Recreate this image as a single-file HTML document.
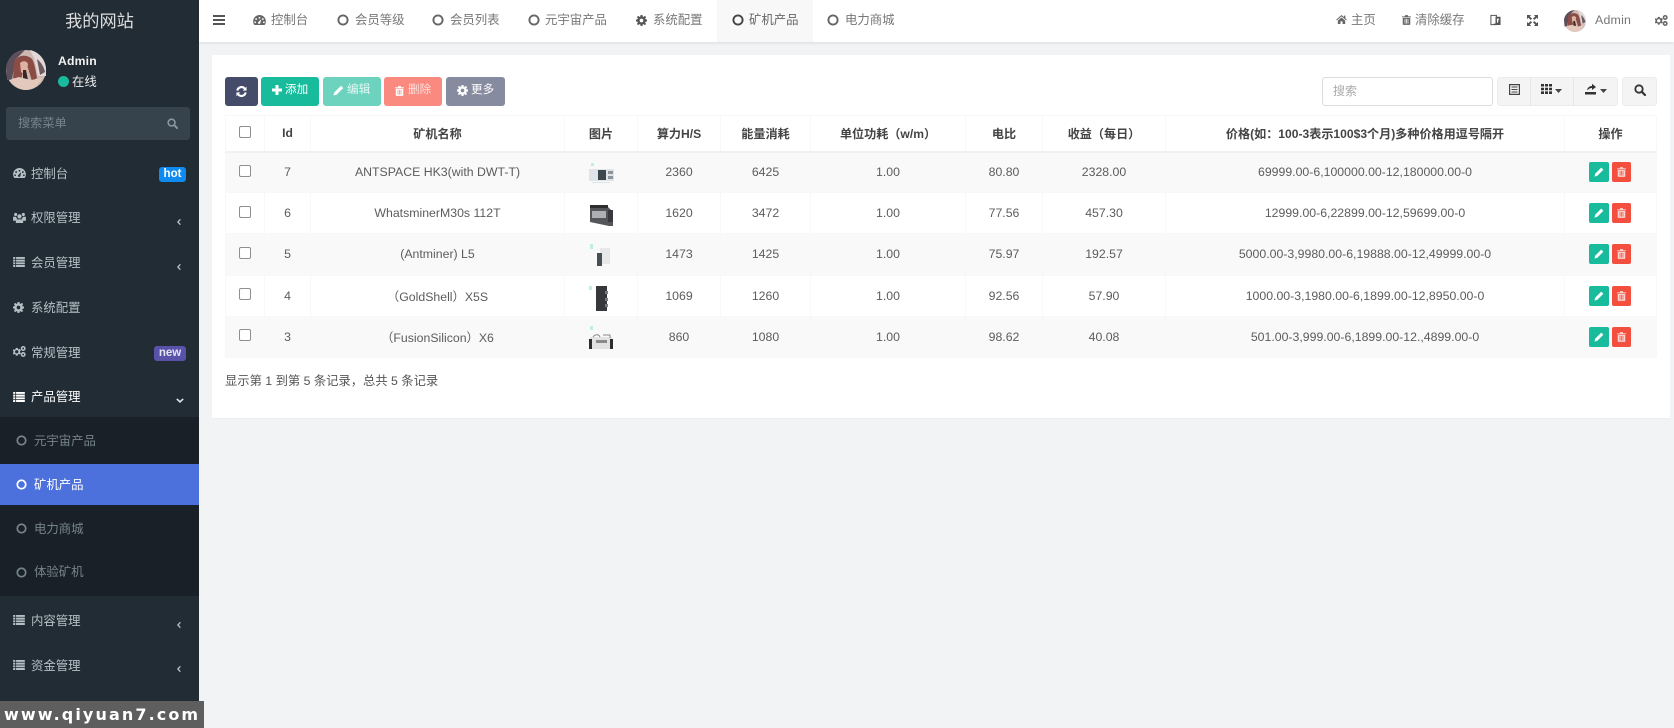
<!DOCTYPE html>
<html lang="zh">
<head>
<meta charset="utf-8">
<title>矿机产品</title>
<style>
*{box-sizing:border-box}
html,body{margin:0;padding:0}
html{background:#f2f3f5}
body{width:1674px;height:728px;overflow:hidden;position:relative;background:#f2f3f5;font-family:"Liberation Sans","Noto Sans CJK SC",sans-serif;font-size:12.3px;color:#555;filter:blur(.35px)}
.a{position:absolute;white-space:nowrap}
svg{display:block;position:absolute;overflow:visible}
#side{position:absolute;left:0;top:0;width:199px;height:728px;background:#212c34;color:#b4c0c6}
.m{position:absolute;left:31px;font-size:12.4px;line-height:16px;white-space:nowrap}
.s{position:absolute;left:34px;font-size:12.4px;line-height:16px;white-space:nowrap;color:#75838a}
#top{position:absolute;left:199px;top:0;width:1475px;height:42px;background:#fff;box-shadow:0 1px 3px rgba(0,0,0,.1)}
.t{position:absolute;font-size:12.4px;line-height:16px;top:12px;color:#777;white-space:nowrap}
#panel{position:absolute;left:212px;top:55px;width:1458px;height:363px;background:#fff;box-shadow:0 1px 1px rgba(0,0,0,.03)}
.b{position:absolute;top:77px;height:29px;border-radius:3px;color:#fff;font-size:11.6px;line-height:26px;white-space:nowrap}
table{position:absolute;left:225px;top:115px;width:1431px;border-collapse:collapse;table-layout:fixed;font-size:12.3px;color:#5c5c5c}
th,td{border:1px solid #f8f8f8;text-align:center;padding:0;font-weight:400;position:relative}
th{height:36px;font-weight:700;color:#444;border-bottom:2px solid #f1f1f1;font-size:12.1px}
td{height:41.2px}
tr.o td{background:#f9f9f9}
.cb{display:block;width:12px;height:12px;border:1px solid #8f8f8f;border-radius:2px;background:#fff;margin:-3px auto 0}
.e,.d{position:absolute;top:50%;margin-top:-10px;width:20px;height:20px;border-radius:2px}
.e{left:24px;background:#18bc9c}
.d{left:47px;width:19px;background:#f44e3f}
#wm{position:absolute;left:0;top:701px;width:204px;height:27px;background:#5e5e5e;color:#fff;font-family:"DejaVu Sans","Liberation Sans",sans-serif;font-weight:700;font-size:16px;letter-spacing:2.1px;line-height:27px;padding-left:4px;white-space:nowrap;overflow:hidden}
</style>
</head>
<body>
<svg width="0" height="0" style="position:absolute">
<defs>
<symbol id="list" viewBox="0 0 14 12"><path fill="currentColor" d="M0 0h2.500v2.300H0zM3.500 0H14v2.300H3.500zM0 3.200h2.500v2.300H0zM3.500 3.200H14v2.300H3.500zM0 6.400h2.500v2.300H0zM3.500 6.400H14v2.300H3.500zM0 9.600h2.500V12H0zM3.500 9.600H14V12H3.500z"/></symbol>
<symbol id="dash" viewBox="0 0 14 11"><path fill="currentColor" fill-rule="evenodd" d="M7 0a7 7 0 0 1 7 7c0 1.600-.5 3-1.400 4H1.400C.5 10 0 8.600 0 7a7 7 0 0 1 7-7zM7 2a1 1 0 1 0 0 2 1 1 0 0 0 0-2zM3.300 3.500a1 1 0 1 0 0 2 1 1 0 0 0 0-2zM10.700 3.500a1 1 0 1 0 0 2 1 1 0 0 0 0-2zM2.200 7a1 1 0 1 0 0 2 1 1 0 0 0 0-2zM11.800 7a1 1 0 1 0 0 2 1 1 0 0 0 0-2zM9 4.500 6.200 7.300a1.300 1.300 0 1 0 1.700 1.500z"/></symbol>
<symbol id="users" viewBox="0 0 14 12"><path fill="currentColor" d="M7 2.500a2.300 2.300 0 1 1 0 4.600 2.300 2.300 0 0 1 0-4.600zM2.800 1a1.700 1.700 0 1 1 0 3.400 1.700 1.700 0 0 1 0-3.400zM11.200 1a1.700 1.700 0 1 1 0 3.400 1.700 1.700 0 0 1 0-3.400zM0 5.200h3.200c.3 1 .8 1.800 1.500 2.200C3.500 8 3 9 3 9.500H0zM14 5.200h-3.200c-.3 1-.8 1.800-1.500 2.200 1.200.6 1.700 1.600 1.700 2.100H14zM4 8h6c.8 0 1 1.200 1 4H3c0-2.800.2-4 1-4z"/></symbol>
<symbol id="cog" viewBox="0 0 12 12"><path fill="currentColor" fill-rule="evenodd" d="M5 0h2l.3 1.700 1 .4L9.800 1l1.300 1.300L10 3.700l.4 1L12 5v2l-1.600.3-.4 1 1 1.500L9.700 11l-1.400-1-1 .4L7 12H5l-.3-1.600-1-.4-1.500 1L1 9.700l1-1.400-.4-1L0 7V5l1.600-.3.4-1L1 2.200 2.300 1l1.400 1 1-.4zM6 4a2 2 0 1 0 0 4 2 2 0 0 0 0-4z"/></symbol>
<symbol id="cogs" viewBox="0 0 14 12"><path fill="currentColor" fill-rule="evenodd" d="M3 2h2l.3 1.200 1 .5 1.200-.5L8.500 5l-.9.900v1l.9.900-1 1.500-1.200-.6-1 .5L5 10.500H3l-.3-1.300-1-.5-1.200.6-.9-1.500.9-.9v-1L-.4 5l.9-1.500 1.200.5 1-.5zM4 4.500a1.800 1.800 0 1 0 0 3.600 1.800 1.800 0 0 0 0-3.600zM11 0a2.700 2.700 0 1 1 0 5.400A2.700 2.700 0 0 1 11 0zm0 1.700a1 1 0 1 0 0 2 1 1 0 0 0 0-2zM11 6.600a2.700 2.700 0 1 1 0 5.400 2.700 2.700 0 0 1 0-5.400zm0 1.700a1 1 0 1 0 0 2 1 1 0 0 0 0-2z"/></symbol>
<symbol id="trash" viewBox="0 0 12 13"><path fill="currentColor" fill-rule="evenodd" d="M4.300 0h3.400l.7 1.600H12v1.300H0V1.600h3.600zM1 3.700h10V12c0 .6-.4 1-1 1H2c-.6 0-1-.4-1-1zM3.500 5v6.300h1V5zm2 0v6.300h1V5zm2 0v6.300h1V5z"/></symbol>
<symbol id="pen" viewBox="0 0 12 12"><path fill="currentColor" d="M8.700.8 11.200 3.300 4 10.500.5 11.500 1.500 8z"/></symbol>
<symbol id="home" viewBox="0 0 13 11"><path fill="currentColor" d="M6.500 0 9.500 2.600V.8h1.700v3.300L13 5.700l-.8.900L6.500 1.700.8 6.600 0 5.700zM2 6.800 6.500 3 11 6.800V11H7.800V7.800H5.200V11H2z"/></symbol>
<symbol id="refresh" viewBox="0 0 12 12"><path fill="none" stroke="currentColor" stroke-width="2.300" d="M1.500 5A4.600 4.600 0 0 1 9.700 3M10.500 7A4.600 4.600 0 0 1 2.300 9"/><path fill="currentColor" d="M11.500.8V5H7.300zM.5 11.200V7h4.200z"/></symbol>
<symbol id="search" viewBox="0 0 12 12"><circle cx="5" cy="5" r="3.700" fill="none" stroke="currentColor" stroke-width="1.800"/><path stroke="currentColor" stroke-width="2.200" stroke-linecap="round" d="M8 8l3 3"/></symbol>
<symbol id="chev" viewBox="0 0 6 10"><path fill="none" stroke="currentColor" stroke-width="2" d="M5 1 1.300 5 5 9"/></symbol>
<symbol id="chevd" viewBox="0 0 10 6"><path fill="none" stroke="currentColor" stroke-width="2" d="M1 1l4 3.700L9 1"/></symbol>
<symbol id="ring" viewBox="0 0 12 12"><circle cx="6" cy="6" r="4.600" fill="none" stroke="currentColor" stroke-width="1.900"/></symbol>
<symbol id="ava" viewBox="0 0 40 40"><circle cx="20" cy="20" r="20" fill="#cdb8b2"/><path fill="#e3d8d8" d="M24 0c9 2 15 9 16 18v8H32L28 8z"/><path fill="#5d4f5a" d="M0 17C2 7 10 1 19 0L9 10l-3 20H1z"/><path fill="#6f5a62" d="M31 9c4 3 7 8 8 13l-5 3z"/><path fill="#8a4c44" d="M9 10c5-6 13-5 17-1 3 5 4 14 5 19l-5 3-4-13-4-1-3 13-8-2c1-6-1-13 2-18z"/><path fill="#deb2a0" d="M14 13c3-3 7-2 8 1l-1 8c-2 2-4 2-6 0z"/><path fill="#3c2624" d="M17 20l3 0 2 10-5 0z"/><path fill="#e2c9bc" d="M3 30l10-3 12 3 11-2c-3 7-9 12-16 12S7 36 3 30z"/></symbol>
<symbol id="tr" viewBox="0 0 12 13"><path fill="none" stroke="currentColor" stroke-width="1.100" d="M1 1.500h6v10H1z"/><path fill="currentColor" d="M6 3h5.500v9H4v-1.500h2z"/><path fill="#fff" d="M7.500 5h2.500v1H9.300l-.6 3.500h-1z"/></symbol>
<symbol id="exp" viewBox="0 0 12 12"><path fill="currentColor" d="M0 0h4.500L3 1.500 5.500 4 4 5.500 1.500 3 0 4.500zM12 0v4.500L10.500 3 8 5.500 6.500 4 9 1.500 7.500 0zM0 12V7.500L1.500 9 4 6.500 5.500 8 3 10.500 4.500 12zM12 12H7.500L9 10.500 6.500 8 8 6.500 10.500 9 12 7.500z"/></symbol>
</defs>
</svg>

<div id="side">
  <div class="a" style="left:0;width:199px;text-align:center;top:9px;font-size:17.2px;line-height:24px;color:#ddd">我的网站</div>
  <svg style="left:6px;top:50px" width="40" height="40"><use href="#ava"/></svg>
  <div class="a" style="left:58px;top:53px;font-size:12.2px;font-weight:700;color:#f2f2f2;line-height:16px;letter-spacing:.2px">Admin</div>
  <div class="a" style="left:58px;top:76px;width:11px;height:11px;border-radius:50%;background:#18bc9c"></div>
  <div class="a" style="left:72px;top:74px;font-size:12.4px;color:#eee;line-height:16px">在线</div>
  <div class="a" style="left:6px;top:107px;width:184px;height:33px;background:#36434c;border-radius:3px"></div>
  <div class="a" style="left:18px;top:115px;font-size:12.2px;line-height:16px;color:#76838b">搜索菜单</div>
  <svg style="left:167px;top:118px;color:#8a969d" width="11" height="11"><use href="#search"/></svg>

  <svg style="left:13px;top:168px" width="13" height="10"><use href="#dash"/></svg>
  <div class="m" style="top:166px">控制台</div>
  <div class="a" style="left:159px;top:167px;width:27px;height:15px;border-radius:3px;background:#0e8af0;color:#fff;font-weight:700;font-size:11.5px;line-height:14px;text-align:center">hot</div>

  <svg style="left:13px;top:212px" width="13" height="11"><use href="#users"/></svg>
  <div class="m" style="top:210px">权限管理</div>
  <svg style="left:177px;top:218px" width="4" height="8"><use href="#chev"/></svg>

  <svg style="left:13px;top:257px" width="12" height="10"><use href="#list"/></svg>
  <div class="m" style="top:255px">会员管理</div>
  <svg style="left:177px;top:263px" width="4" height="8"><use href="#chev"/></svg>

  <svg style="left:13px;top:302px" width="11" height="11"><use href="#cog"/></svg>
  <div class="m" style="top:300px">系统配置</div>

  <svg style="left:13px;top:346px" width="13" height="11"><use href="#cogs"/></svg>
  <div class="m" style="top:345px">常规管理</div>
  <div class="a" style="left:154px;top:346px;width:32px;height:15px;border-radius:3px;background:#5a52a8;color:#e4e4f2;font-weight:700;font-size:11.5px;line-height:14px;text-align:center">new</div>

  <svg style="left:13px;top:392px;color:#fff" width="12" height="10"><use href="#list"/></svg>
  <div class="m" style="top:389px;color:#fff">产品管理</div>
  <svg style="left:176px;top:398px;color:#dfe4e6" width="8" height="5"><use href="#chevd"/></svg>

  <div class="a" style="left:0;top:417px;width:199px;height:179px;background:#1a2028"></div>
  <div class="a" style="left:0;top:464px;width:199px;height:41px;background:#4c70dc"></div>
  <svg style="left:16px;top:435px;color:#75838a" width="11" height="11"><use href="#ring"/></svg>
  <div class="s" style="top:433px">元宇宙产品</div>
  <svg style="left:16px;top:479px;color:#fff" width="11" height="11"><use href="#ring"/></svg>
  <div class="s" style="top:477px;color:#fff">矿机产品</div>
  <svg style="left:16px;top:523px;color:#75838a" width="11" height="11"><use href="#ring"/></svg>
  <div class="s" style="top:521px;left:34px">电力商城</div>
  <svg style="left:16px;top:567px;color:#75838a" width="11" height="11"><use href="#ring"/></svg>
  <div class="s" style="top:564px">体验矿机</div>

  <svg style="left:13px;top:615px" width="12" height="10"><use href="#list"/></svg>
  <div class="m" style="top:613px">内容管理</div>
  <svg style="left:177px;top:621px" width="4" height="8"><use href="#chev"/></svg>
  <svg style="left:13px;top:660px" width="12" height="10"><use href="#list"/></svg>
  <div class="m" style="top:658px">资金管理</div>
  <svg style="left:177px;top:665px" width="4" height="8"><use href="#chev"/></svg>
</div>

<div id="top">
  <div class="a" style="left:518px;top:0;width:96px;height:42px;background:#f8f8f8"></div>
  <svg style="left:14px;top:15px;color:#555" width="12" height="10"><path fill="currentColor" d="M0 0h12v2H0zM0 4h12v2H0zM0 8h12v2H0z"/></svg>
  <svg style="left:54px;top:15px;color:#666" width="13" height="10"><use href="#dash"/></svg>
  <div class="t" style="left:72px">控制台</div>
  <svg style="left:138px;top:14px;color:#666" width="12" height="12"><use href="#ring"/></svg>
  <div class="t" style="left:156px">会员等级</div>
  <svg style="left:233px;top:14px;color:#666" width="12" height="12"><use href="#ring"/></svg>
  <div class="t" style="left:251px">会员列表</div>
  <svg style="left:329px;top:14px;color:#666" width="12" height="12"><use href="#ring"/></svg>
  <div class="t" style="left:346px">元宇宙产品</div>
  <svg style="left:437px;top:15px;color:#555" width="11" height="11"><use href="#cog"/></svg>
  <div class="t" style="left:454px">系统配置</div>
  <svg style="left:533px;top:14px;color:#444" width="12" height="12"><use href="#ring"/></svg>
  <div class="t" style="left:550px;color:#666">矿机产品</div>
  <svg style="left:628px;top:14px;color:#666" width="12" height="12"><use href="#ring"/></svg>
  <div class="t" style="left:646px">电力商城</div>

  <svg style="left:1137px;top:15px;color:#666" width="11" height="9"><use href="#home"/></svg>
  <div class="t" style="left:1152px">主页</div>
  <svg style="left:1203px;top:15px;color:#666" width="9" height="10"><use href="#trash"/></svg>
  <div class="t" style="left:1216px">清除缓存</div>
  <svg style="left:1291px;top:14px;color:#555" width="11" height="12"><use href="#tr"/></svg>
  <svg style="left:1328px;top:15px;color:#555" width="11" height="11"><use href="#exp"/></svg>
  <svg style="left:1365px;top:10px" width="22" height="22"><use href="#ava"/></svg>
  <div class="t" style="left:1396px;letter-spacing:.2px">Admin</div>
  <svg style="left:1456px;top:15px;color:#666" width="13" height="11"><use href="#cogs"/></svg>
</div>

<div id="panel"></div>

<div class="b" style="left:225px;width:33px;background:#444c69"><svg style="left:11px;top:9px" width="11" height="11"><use href="#refresh"/></svg></div>
<div class="b" style="left:261px;width:58px;background:#18bc9c"><svg style="left:11px;top:8px" width="10" height="10"><path fill="currentColor" d="M3.500 0h3v3.500H10v3H6.500V10h-3V6.500H0v-3h3.500z"/></svg><span class="a" style="left:24px">添加</span></div>
<div class="b" style="left:323px;width:58px;background:#6ed3be"><svg style="left:10px;top:8px" width="11" height="11"><use href="#pen"/></svg><span class="a" style="left:24px;color:#e4f7f3">编辑</span></div>
<div class="b" style="left:384px;width:58px;background:#fa8a7f"><svg style="left:11px;top:9px" width="9" height="10"><use href="#trash"/></svg><span class="a" style="left:24px;color:#fde0dc">删除</span></div>
<div class="b" style="left:446px;width:59px;background:#868b9f"><svg style="left:11px;top:8px" width="11" height="11"><use href="#cog"/></svg><span class="a" style="left:25px">更多</span></div>

<div class="a" style="left:1322px;top:77px;width:171px;height:29px;border:1px solid #dcdcdc;border-radius:3px;background:#fff"></div>
<div class="a" style="left:1333px;top:83px;font-size:12px;line-height:16px;color:#aaa">搜索</div>
<div class="a" style="left:1497px;top:77px;width:121px;height:29px;background:#f4f4f4;border:1px solid #ececec;border-radius:3px"></div>
<div class="a" style="left:1530px;top:77px;width:1px;height:29px;background:#e6e6e6"></div>
<div class="a" style="left:1573px;top:77px;width:1px;height:29px;background:#e6e6e6"></div>
<svg style="left:1509px;top:84px;color:#444" width="11" height="12"><path fill="none" stroke="currentColor" stroke-width="1.200" d="M.6.600h9.800v9.800H.6z"/><path fill="currentColor" d="M2.500 2.500h6v1h-6zM2.500 5h6v1h-6zM2.500 7.500h6v1h-6z"/></svg>
<svg style="left:1541px;top:84px;color:#333" width="11" height="10"><path fill="currentColor" d="M0 0h3v2.500H0zM4 0h3v2.500H4zM8 0h3v2.500H8zM0 3.700h3v2.500H0zM4 3.700h3v2.500H4zM8 3.700h3v2.500H8zM0 7.400h3V10H0zM4 7.400h3V10H4zM8 7.400h3V10H8z"/></svg>
<svg style="left:1555px;top:89px;color:#444" width="7" height="4"><path fill="currentColor" d="M0 0h7L3.500 4z"/></svg>
<svg style="left:1585px;top:83px;color:#333" width="11" height="12"><path fill="currentColor" d="M0 9h11v2.500H0zM2 7.500c.5-3 2.500-4.500 5-4.500V.8L11 4 7 7V5C5 5 3.500 6 2 7.500z"/></svg>
<svg style="left:1600px;top:89px;color:#444" width="7" height="4"><path fill="currentColor" d="M0 0h7L3.500 4z"/></svg>
<div class="a" style="left:1622px;top:77px;width:35px;height:29px;background:#f4f4f4;border:1px solid #ececec;border-radius:3px"></div>
<svg style="left:1634px;top:84px;color:#333" width="12" height="12"><use href="#search"/></svg>

<table>
<colgroup>
<col style="width:39px"><col style="width:46px"><col style="width:254px"><col style="width:73px"><col style="width:83px"><col style="width:90px"><col style="width:155px"><col style="width:77px"><col style="width:123px"><col style="width:399px"><col style="width:92px">
</colgroup>
<tr>
<th><span class="cb"></span></th><th>Id</th><th>矿机名称</th><th>图片</th><th>算力H/S</th><th>能量消耗</th><th>单位功耗（w/m）</th><th>电比</th><th>收益（每日）</th><th>价格(如：100-3表示100$3个月)多种价格用逗号隔开</th><th>操作</th>
</tr>
<tr class="o">
<td><span class="cb"></span></td><td>7</td><td>ANTSPACE HK3(with DWT-T)</td>
<td><svg style="left:23px;top:10px" width="27" height="22"><path fill="#bfeee8" d="M3 0h3v3H3z"/><path fill="#dfe4e8" d="M1 6h25v12H1z"/><path fill="#3c474e" d="M10 7h8v10h-8z"/><path fill="#8b959b" d="M20 8h5v3h-5zM20 13h5v3h-5z"/><path fill="#d7e8ec" d="M4 19h18v1H4z"/></svg></td>
<td>2360</td><td>6425</td><td>1.00</td><td>80.80</td><td>2328.00</td><td>69999.00-6,100000.00-12,180000.00-0</td>
<td><span class="e"><svg style="left:5px;top:5px;color:#fff" width="10" height="10"><use href="#pen"/></svg></span><span class="d"><svg style="left:5px;top:5px;color:#fbd5d0" width="9" height="10"><use href="#trash"/></svg></span></td>
</tr>
<tr>
<td><span class="cb"></span></td><td>6</td><td>WhatsminerM30s 112T</td>
<td><svg style="left:23px;top:9px" width="27" height="24"><path fill="#55565a" d="M2 4 20 5l5 5v14l-4 0L2 20z"/><path fill="#2e2e31" d="M2 3h18v3H2z"/><path fill="#b0b0b4" d="M4 9h14v7H4z"/><path fill="#3a3a3e" d="M20 8h5v12h-5z"/></svg></td>
<td>1620</td><td>3472</td><td>1.00</td><td>77.56</td><td>457.30</td><td>12999.00-6,22899.00-12,59699.00-0</td>
<td><span class="e"><svg style="left:5px;top:5px;color:#fff" width="10" height="10"><use href="#pen"/></svg></span><span class="d"><svg style="left:5px;top:5px;color:#fbd5d0" width="9" height="10"><use href="#trash"/></svg></span></td>
</tr>
<tr class="o">
<td><span class="cb"></span></td><td>5</td><td>(Antminer) L5</td>
<td><svg style="left:22px;top:9px" width="27" height="24"><path fill="#bfeee8" d="M3 1h3v5H3z"/><path fill="#e6e8ea" d="M13 5h10v16H13z"/><path fill="#4a4f54" d="M10 10h5v13h-5z"/></svg></td>
<td>1473</td><td>1425</td><td>1.00</td><td>75.97</td><td>192.57</td><td>5000.00-3,9980.00-6,19888.00-12,49999.00-0</td>
<td><span class="e"><svg style="left:5px;top:5px;color:#fff" width="10" height="10"><use href="#pen"/></svg></span><span class="d"><svg style="left:5px;top:5px;color:#fbd5d0" width="9" height="10"><use href="#trash"/></svg></span></td>
</tr>
<tr>
<td><span class="cb"></span></td><td>4</td><td>（GoldShell）X5S</td>
<td><svg style="left:22px;top:8px" width="27" height="27"><path fill="#bfeee8" d="M2 2h3v4H2z"/><path fill="#36383b" d="M9 2h11v25H9z"/><path fill="#77797c" d="M18 7h3v3h-3zM18 14h3v3h-3zM18 20h3v3h-3z"/></svg></td>
<td>1069</td><td>1260</td><td>1.00</td><td>92.56</td><td>57.90</td><td>1000.00-3,1980.00-6,1899.00-12,8950.00-0</td>
<td><span class="e"><svg style="left:5px;top:5px;color:#fff" width="10" height="10"><use href="#pen"/></svg></span><span class="d"><svg style="left:5px;top:5px;color:#fbd5d0" width="9" height="10"><use href="#trash"/></svg></span></td>
</tr>
<tr class="o">
<td><span class="cb"></span></td><td>3</td><td>（FusionSilicon）X6</td>
<td><svg style="left:22px;top:8px" width="28" height="26"><path fill="#bfeee8" d="M3 1h3v4H3z"/><path fill="#e2e2e2" d="M3 12h22v12H3z"/><path fill="#2d2d30" d="M2 14h3v10H2zM23 14h3v10h-3z"/><path fill="#8a8a8a" d="M9 15h11v3H9z"/><path fill="none" stroke="#888" d="M6 12c2-3 6-3 7 0M16 10h7v3"/></svg></td>
<td>860</td><td>1080</td><td>1.00</td><td>98.62</td><td>40.08</td><td>501.00-3,999.00-6,1899.00-12.,4899.00-0</td>
<td><span class="e"><svg style="left:5px;top:5px;color:#fff" width="10" height="10"><use href="#pen"/></svg></span><span class="d"><svg style="left:5px;top:5px;color:#fbd5d0" width="9" height="10"><use href="#trash"/></svg></span></td>
</tr>
</table>

<div class="a" style="left:225px;top:373px;line-height:16px;font-size:12.3px;color:#555">显示第 1 到第 5 条记录，总共 5 条记录</div>

<div id="wm">www.qiyuan7.com</div>
</body>
</html>
